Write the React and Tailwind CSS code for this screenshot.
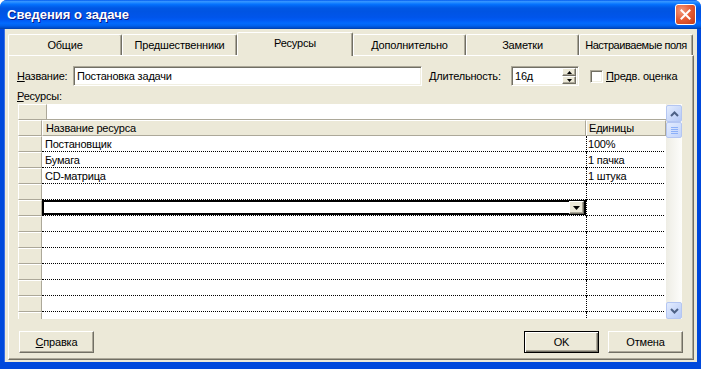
import React from 'react';

const tabs = [
  { label: 'Общие', w: 'w-[114px]' },
  { label: 'Предшественники', w: 'w-[115px]' },
  { label: 'Ресурсы', w: 'w-[116px]', active: true },
  { label: 'Дополнительно', w: 'w-[113px]' },
  { label: 'Заметки', w: 'w-[113px]' },
  { label: 'Настраиваемые поля', w: 'w-[114px] tracking-[-0.45px]' },
];

const rows = [
  { name: 'Постановщик', units: '100%' },
  { name: 'Бумага', units: '1 пачка' },
  { name: 'CD-матрица', units: '1 штука' },
  { name: '', units: '' },
  { name: '', units: '', selected: true },
  { name: '', units: '' },
  { name: '', units: '' },
  { name: '', units: '' },
  { name: '', units: '' },
  { name: '', units: '' },
  { name: '', units: '' },
  { name: '', units: '' },
];

const raised =
  'bg-[#ECE9D8] border border-t-white border-l-white border-r-[#716F64] border-b-[#716F64] shadow-[inset_-1px_-1px_0_#ACA899]';
const sunken =
  'bg-white border border-t-[#ACA899] border-l-[#ACA899] border-r-white border-b-white shadow-[inset_1px_1px_0_#716F64,inset_-1px_-1px_0_#F1EFE2]';
const headCell = 'bg-[#ECE9D8] border border-t-white border-l-white border-r-[#ACA899] border-b-[#ACA899]';

const Arrow = ({ up }) => (
  <svg width="9" height="6" viewBox="0 0 9 6">
    <path d={up ? 'M1 5 L4.5 1.5 L8 5' : 'M1 1 L4.5 4.5 L8 1'} fill="none" stroke="#4D6185" strokeWidth="2" />
  </svg>
);

const ScrollBtn = ({ up }) => (
  <div className="h-[17px] w-[16px] rounded-[2px] border border-[#B4C6F2] bg-[linear-gradient(135deg,#E3ECFE,#B6CAF7)] flex items-center justify-center">
    <Arrow up={up} />
  </div>
);

const Tab = ({ label, w, active }) =>
  active ? (
    <div className={`${w} h-[24px] -mb-px relative z-10 bg-[#ECE9D8] border-l border-t border-white border-r border-r-[#716F64] rounded-t-[2px] shadow-[inset_-1px_0_0_#ACA899] flex items-center justify-center pb-[2px] whitespace-nowrap`}>
      {label}
    </div>
  ) : (
    <div className={`${w} h-[21px] bg-[#ECE9D8] border-l border-t border-white border-r border-r-[#716F64] rounded-t-[2px] shadow-[inset_-1px_0_0_#ACA899] flex items-center justify-center whitespace-nowrap`}>
      {label}
    </div>
  );

export default function App() {
  return (
    <div className="w-[701px] h-[369px] bg-white font-['Liberation_Sans',Arial,sans-serif] text-[11px] leading-[13px] tracking-[-0.2px] text-black">
      <div className="w-full h-full flex flex-col rounded-t-[7px] overflow-hidden bg-[#0049DC]">
        {/* title bar */}
        <div className="h-[29px] shrink-0 flex items-center justify-between pl-[7px] pr-[5px] bg-[linear-gradient(180deg,#0058EE_0%,#3593FF_5%,#288EFF_8%,#127DFF_12%,#036FFC_16%,#0262EE_22%,#0057E5_28%,#0054E3_40%,#0055EB_60%,#005BF5_70%,#026AFE_80%,#0062EF_88%,#0052D6_94%,#0040AB_100%)]">
          <span className="text-white font-bold text-[13px] tracking-normal [text-shadow:1px_1px_0_#0A1883]">Сведения о задаче</span>
          <div className="w-[21px] h-[21px] rounded-[3px] border border-white bg-[radial-gradient(circle_at_30%_30%,#F29A7D,#E45A33_50%,#C23A16)] flex items-center justify-center">
            <svg width="11" height="11" viewBox="0 0 11 11">
              <path d="M1.5 1.5 L9.5 9.5 M9.5 1.5 L1.5 9.5" stroke="white" strokeWidth="2" strokeLinecap="square" />
            </svg>
          </div>
        </div>

        {/* body */}
        <div className="mx-[4px] mb-[7px] flex-1 bg-[#ECE9D8] pt-[3px] px-[3px] border-l border-[#3B6FE6]">
          {/* tabs */}
          <div className="flex items-end h-[23px]">
            {tabs.map((t) => (
              <Tab key={t.label} {...t} />
            ))}
          </div>

          {/* panel */}
          <div className="w-[686px] h-[305px] border border-t-white border-l-white border-r-[#716F64] border-b-[#716F64] shadow-[inset_-1px_-1px_0_#ACA899] pl-[8px] pt-[10px] flex flex-col">
            {/* first row */}
            <div className="flex items-center h-[20px]">
              <div className="w-[56px]">
                <span className="underline">Н</span>азвание:
              </div>
              <div className={`${sunken} w-[349px] h-[20px] flex items-center pl-[3px]`}>Постановка задачи</div>
              <div className="w-[82px] ml-[7px]">
                <span className="underline">Д</span>лительность:
              </div>
              <div className={`${sunken} w-[68px] h-[20px] flex items-center justify-between pl-[3px] pr-[2px]`}>
                <span>16д</span>
                <div className="flex flex-col w-[14px] h-[16px]">
                  <div className={`${raised} h-[8px] flex items-center justify-center`}>
                    <svg width="5" height="3" viewBox="0 0 5 3"><path d="M2.5 0 L5 3 L0 3 Z" fill="#000" /></svg>
                  </div>
                  <div className={`${raised} h-[8px] flex items-center justify-center`}>
                    <svg width="5" height="3" viewBox="0 0 5 3"><path d="M0 0 L5 0 L2.5 3 Z" fill="#000" /></svg>
                  </div>
                </div>
              </div>
              <div className={`${sunken} w-[13px] h-[13px] ml-[11px]`} />
              <div className="ml-[3px]">
                <span className="underline">П</span>редв. оценка
              </div>
            </div>

            {/* resources label */}
            <div className="h-[14px] leading-[14px] mt-[3px]">
              <span className="underline">Р</span>есурсы:
            </div>

            {/* grid */}
            <div className="ml-[1px] mt-[1px] w-[664px] h-[215px] flex">
              <div className="w-[648px] flex flex-col">
                {/* edit bar */}
                <div className="flex h-[16px]">
                  <div className={`${headCell} w-[29px] h-full`} />
                  <div className="flex-1 h-full bg-white border-b border-[#ACA899]" />
                </div>
                {/* header */}
                <div className="flex h-[16px]">
                  <div className={`${headCell} w-[24px] h-full`} />
                  <div className={`${headCell} w-[544px] h-full pl-[3px] pt-[1px] flex items-center`}>Название ресурса</div>
                  <div className={`${headCell} w-[80px] h-full pl-[2px] pt-[1px] flex items-center`}>Единицы</div>
                </div>
                {/* body rows */}
                <div className="h-[183px] overflow-hidden flex flex-col">
                  {rows.map((r, i) => (
                    <div key={i} className="flex h-[16px] shrink-0">
                      <div className={`${headCell} w-[24px] h-full`} />
                      <div
                        className={`w-[544px] h-full bg-white border-b border-dotted border-black pl-[3px] flex items-center justify-between ${
                          r.selected ? 'shadow-[inset_0_0_0_2px_#000] pr-[2px]' : 'pt-[2px]'
                        }`}
                      >
                        <span>{r.name}</span>
                        {r.selected && (
                          <div className={`${raised} w-[15px] h-[13px] flex items-center justify-center`}>
                            <svg width="7" height="4" viewBox="0 0 7 4"><path d="M0 0 L7 0 L3.5 4 Z" fill="#000" /></svg>
                          </div>
                        )}
                      </div>
                      <div className="w-[78px] h-full bg-white border-l border-b border-dotted border-black pl-[1px] pt-[2px] flex items-center">
                        {r.units}
                      </div>
                      <div className="w-[2px] h-full bg-white" />
                    </div>
                  ))}
                </div>
              </div>

              {/* scrollbar */}
              <div className="w-[16px] h-full flex flex-col bg-[linear-gradient(90deg,#EEEDE5,#FDFDFB)] pt-[1px]">
                <ScrollBtn up />
                <div className="h-[16px] w-[16px] rounded-[2px] border border-[#B4C6F2] bg-[linear-gradient(135deg,#E3ECFE,#C1D3FB)] flex flex-col items-center justify-center gap-[1px]">
                  <div className="w-[7px] h-[1px] bg-[#8CB0F8]" />
                  <div className="w-[7px] h-[1px] bg-[#8CB0F8]" />
                  <div className="w-[7px] h-[1px] bg-[#8CB0F8]" />
                  <div className="w-[7px] h-[1px] bg-[#8CB0F8]" />
                </div>
                <div className="flex-1" />
                <ScrollBtn />
              </div>
            </div>

            {/* buttons */}
            <div className="mt-[12px] flex items-center w-[666px]">
              <div className={`${raised} ml-[2px] w-[75px] h-[22px] flex items-center justify-center`}>
                <span>
                  <span className="underline">С</span>правка
                </span>
              </div>
              <div className="flex-1" />
              <div className="w-[75px] h-[22px] border border-black bg-[#ECE9D8] shadow-[inset_1px_1px_0_#fff,inset_-1px_-1px_0_#716F64,inset_-2px_-2px_0_#ACA899] flex items-center justify-center">
                OK
              </div>
              <div className={`${raised} ml-[9px] w-[75px] h-[22px] flex items-center justify-center`}>Отмена</div>
            </div>
          </div>
        </div>
      </div>
    </div>
  );
}
